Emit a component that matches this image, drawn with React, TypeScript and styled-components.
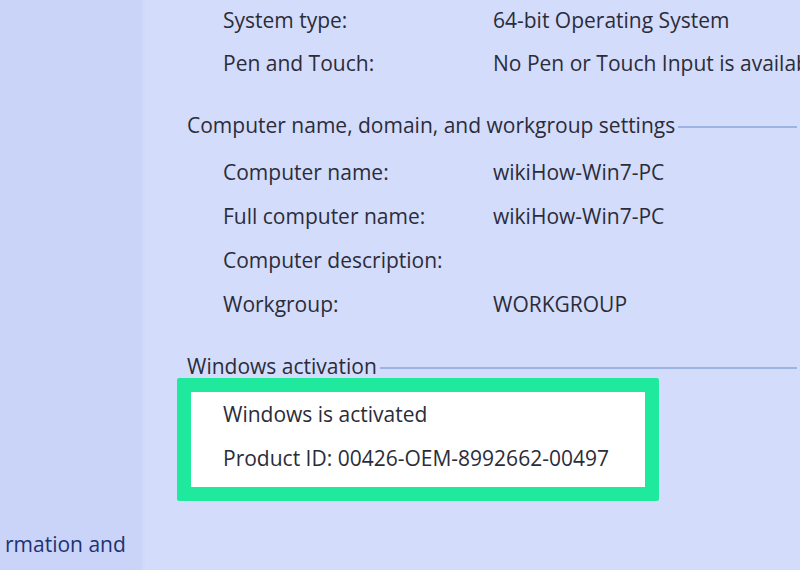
import React from "react";
import styled, { createGlobalStyle } from "styled-components";

const Global = createGlobalStyle`
  html, body { margin: 0; padding: 0; }
  body {
    width: 800px;
    height: 570px;
    overflow: hidden;
    background: #d4dcfb;
    font-family: "Open Sans", "Noto Sans", "Liberation Sans", sans-serif;
  }
`;

const Page = styled.div`
  display: flex;
  width: 800px;
  height: 570px;
  overflow: hidden;
  background: #d4dcfb;
`;

const Sidebar = styled.aside`
  width: 145px;
  flex: none;
  background: #c9d4f8;
  border-right: 3px solid #d0d9fa;
  display: flex;
  flex-direction: column;
  justify-content: flex-end;
  padding: 0 0 13px 5px;
  box-sizing: border-box;
  overflow: hidden;
`;

const SideLink = styled.div`
  font-size: 21px;
  line-height: 26px;
  color: #1f3272;
  white-space: nowrap;
`;

const Main = styled.main`
  flex: 1;
  min-width: 0;
  padding-left: 42px;
  display: flex;
  flex-direction: column;
  margin-top: -1.5px;
  overflow: hidden;
`;

const Row = styled.div<{ $h?: number }>`
  display: grid;
  grid-template-columns: 270px auto;
  padding-left: 36px;
  height: ${(p) => p.$h ?? 44}px;
  line-height: ${(p) => p.$h ?? 44}px;
  font-size: 21px;
  color: #2b2c3a;
  white-space: nowrap;
`;

const Label = styled.span``;
const Value = styled.span``;

const Group = styled.div<{ $top: number }>`
  display: flex;
  flex-direction: column;
  margin-top: ${(p) => p.$top}px;
`;

const Heading = styled.div<{ $top: number }>`
  display: flex;
  align-items: center;
  gap: 3px;
  height: 24px;
  margin-top: ${(p) => p.$top}px;
  font-size: 21px;
  color: #2b2c3a;
  white-space: nowrap;
  &::after {
    content: "";
    flex: 1;
    height: 2px;
    margin-top: 5px;
    background: #9db3e2;
    margin-right: 3px;
  }
`;

const ActivationBox = styled.div`
  width: 482px;
  box-sizing: border-box;
  margin-left: -10px;
  border: 14px solid #1fe99c;
  border-radius: 2px;
  background: #ffffff;
  padding: 0 0 7px 0;
  display: flex;
  flex-direction: column;
`;

const BoxRow = styled(Row)`
  padding-left: 32px;
  display: block;
`;

export default function App() {
  return (
    <>
      <Global />
      <Page>
        <Sidebar>
          <SideLink>rmation and</SideLink>
        </Sidebar>
        <Main>
          <Group $top={0}>
            <Row $h={43}>
              <Label>System type:</Label>
              <Value>64-bit Operating System</Value>
            </Row>
            <Row $h={43}>
              <Label>Pen and Touch:</Label>
              <Value>No Pen or Touch Input is available for this Display</Value>
            </Row>
          </Group>
          <Heading $top={28}>Computer name, domain, and workgroup settings</Heading>
          <Group $top={13}>
            <Row>
              <Label>Computer name:</Label>
              <Value>wikiHow-Win7-PC</Value>
            </Row>
            <Row>
              <Label>Full computer name:</Label>
              <Value>wikiHow-Win7-PC</Value>
            </Row>
            <Row>
              <Label>Computer description:</Label>
              <Value></Value>
            </Row>
            <Row>
              <Label>Workgroup:</Label>
              <Value>WORKGROUP</Value>
            </Row>
          </Group>
          <Heading $top={28}>Windows activation</Heading>
          <ActivationBox>
            <BoxRow>Windows is activated</BoxRow>
            <BoxRow>Product ID: 00426-OEM-8992662-00497</BoxRow>
          </ActivationBox>
        </Main>
      </Page>
    </>
  );
}
